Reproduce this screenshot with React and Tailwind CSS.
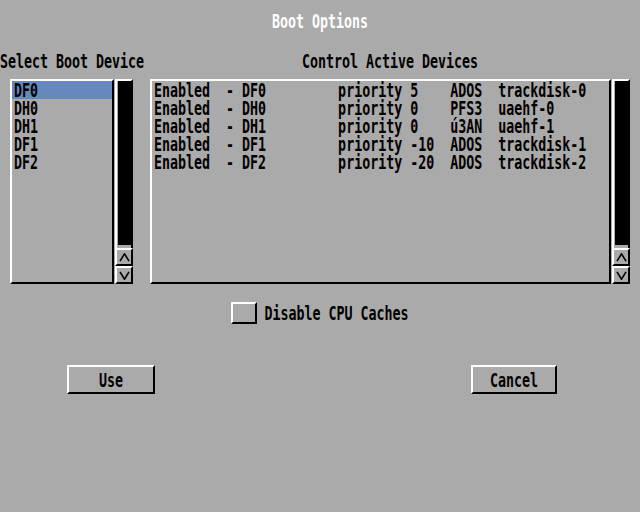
import React from "react";

const devices = [
	["DF0", "5", "ADOS", "trackdisk-0"],
	["DH0", "0", "PFS3", "uaehf-0"],
	["DH1", "0", "ú3AN", "uaehf-1"],
	["DF1", "-10", "ADOS", "trackdisk-1"],
	["DF2", "-20", "ADOS", "trackdisk-2"],
];

// topaz-ish: 8px cells, stretched vertically
const Txt = ({ children }) => (
	<span className="block translate-y-[1px] scale-y-[1.4] whitespace-pre leading-[12px]">
		{children}
	</span>
);

const Arrow = ({ up }) => (
	<svg width="11" height="9" viewBox="0 0 11 9">
		<path
			d={up ? "M1 8.2 L5.5 0.8 L10 8.2" : "M1 0.8 L5.5 8.2 L10 0.8"}
			stroke="black"
			strokeWidth="1.6"
			fill="none"
		/>
	</svg>
);

const Scroller = () => (
	<div className="ml-[1px] flex w-[18px] flex-col">
		<div className="flex h-[169px] border-l-2 border-r-2 border-t-2 border-l-white border-r-black border-t-white pb-[3px] pl-[1px]">
			<div className="flex-1 bg-black" />
		</div>
		<div className="flex h-[18px] items-center justify-center border-2 border-b-black border-l-white border-r-black border-t-white">
			<Arrow up />
		</div>
		<div className="flex h-[18px] items-center justify-center border-2 border-b-black border-l-white border-r-black border-t-white">
			<Arrow />
		</div>
	</div>
);

const bevel = "border-2 border-t-white border-l-white border-r-black border-b-black";

export default function App() {
	return (
		<div className="h-[512px] w-[640px] overflow-hidden bg-[#aaaaaa] pt-[12px] font-['DejaVu_Sans_Mono',monospace] text-[13.3px] font-bold text-black">
			<div className="flex h-[18px] items-center justify-center text-white">
				<Txt>Boot Options</Txt>
			</div>

			<div className="mt-[22px] flex">
				<div className="flex w-[150px] flex-col">
					<div className="flex h-[18px] items-center">
						<Txt>Select Boot Device</Txt>
					</div>
					<div className="ml-[10px] mt-[9px] flex h-[205px]">
						<div className={"w-[104px] " + bevel}>
							{devices.map((d, i) => (
								<div
									key={d[0]}
									className={"flex h-[18px] items-center pl-[2px] " + (i === 0 ? "bg-[#6688bb]" : "")}>
									<Txt>{d[0]}</Txt>
								</div>
							))}
						</div>
						<Scroller />
					</div>
				</div>

				<div className="flex w-[480px] flex-col">
					<div className="flex h-[18px] items-center justify-center">
						<Txt>Control Active Devices</Txt>
					</div>
					<div className="mt-[9px] flex h-[205px]">
						<div className={"w-[461px] " + bevel}>
							{devices.map((d) => (
								<div key={d[0]} className="flex h-[18px] items-center pl-[2px]">
									<Txt>
										{("Enabled  - " + d[0]).padEnd(23) +
											("priority " + d[1]).padEnd(14) +
											d[2].padEnd(6) +
											d[3]}
									</Txt>
								</div>
							))}
						</div>
						<Scroller />
					</div>
				</div>
			</div>

			<div className="mt-[18px] flex h-[22px] items-center justify-center gap-[7px]">
				<div className={"h-[22px] w-[26px] " + bevel} />
				<Txt>Disable CPU Caches</Txt>
			</div>

			<div className="mt-[41px] flex justify-between pl-[67px] pr-[83px]">
				<div className={"flex h-[29px] w-[88px] items-center justify-center " + bevel}>
					<Txt>Use</Txt>
				</div>
				<div className={"flex h-[29px] w-[86px] items-center justify-center " + bevel}>
					<Txt>Cancel</Txt>
				</div>
			</div>
		</div>
	);
}
